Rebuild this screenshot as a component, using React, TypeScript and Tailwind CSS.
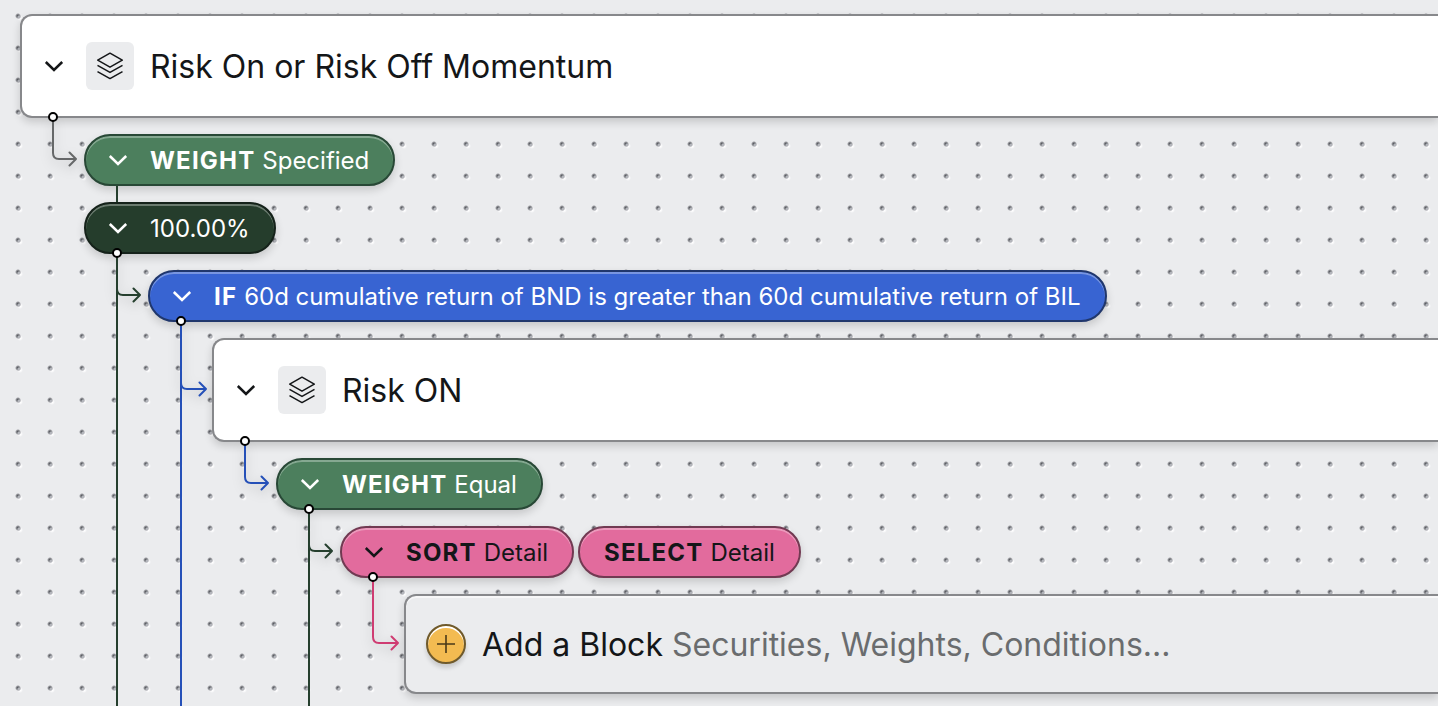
import React from 'react';
import clsx from 'clsx';

type Tone = 'gray' | 'green' | 'blue' | 'pink';

const lineColor: Record<Tone, string> = {
  gray: 'text-[#666869]',
  green: 'text-[#253f2e]',
  blue: 'text-[#2550b8]',
  pink: 'text-[#cf3c72]',
};

const pillColor = {
  green: 'bg-[#4c7f5d] border-[#284836] text-white',
  dark: 'bg-[#253d2c] border-[#15221a] text-white',
  blue: 'bg-[#3864d2] border-[#20376c] text-white',
  pink: 'bg-[#e26b9d] border-[#713a52] text-[#141618]',
};

const Toggle: React.FC = () => (
  <button type="button" aria-label="Collapse" className="flex size-6 shrink-0 items-center justify-center">
    <svg className="h-3 w-5" viewBox="0 0 20 12" fill="none" stroke="currentColor" strokeWidth="2.5">
      <path d="M1.8 2 10 10 18.2 2" />
    </svg>
  </button>
);

const LayersIcon: React.FC = () => (
  <div className="flex size-12 shrink-0 items-center justify-center rounded-md bg-[#ebecee]">
    <svg className="size-7" viewBox="0 0 28 28" fill="none" stroke="currentColor" strokeWidth="1.5" strokeLinejoin="round">
      <path d="M14 1.2 26.3 8.2 14 15.2 1.7 8.2Z" />
      <path d="M1.5 13.4 14 20.4 26.5 13.4" />
      <path d="M1.5 19.6 14 26.6 26.5 19.6" />
    </svg>
  </div>
);

const Pill: React.FC<{ color: keyof typeof pillColor; keyword?: string; text: string; toggle?: boolean }> = ({
  color,
  keyword,
  text,
  toggle = true,
}) => (
  <div
    className={clsx(
      'flex h-13 w-fit items-center gap-5 rounded-full border-2 pr-6 text-2xl whitespace-nowrap',
      'shadow-[inset_0_2px_0_rgba(255,255,255,0.32),0_4px_8px_rgba(0,0,0,0.16)]',
      toggle ? 'pl-5' : 'pl-6',
      pillColor[color],
    )}
  >
    {toggle && <Toggle />}
    <button type="button" className="pt-0.5 leading-7">
      {keyword && <span className="font-bold tracking-wider">{keyword} </span>}
      {text}
    </button>
  </div>
);

const GroupCard: React.FC<{ title: string }> = ({ title }) => (
  <div className="flex items-center rounded-l-xl border-2 border-r-0 border-[#87888b] bg-white py-6.5 pl-5 shadow-[0_4px_8px_rgba(0,0,0,0.16)]">
    <Toggle />
    <div className="ml-5">
      <LayersIcon />
    </div>
    <h2 className="ml-4 pt-0.5 text-[32px] leading-9 whitespace-nowrap">{title}</h2>
  </div>
);

// depth is the distance from the parent's bottom edge down to the arrow, reach is where its tip ends
const Branch: React.FC<{
  tone: Tone;
  depth: number;
  reach?: number;
  continued?: boolean;
  className?: string;
  children: React.ReactNode;
}> = ({ tone, depth, reach = 24, continued, className, children }) => (
  <div className={clsx('relative pt-4 pl-16', className)}>
    <div className={clsx('pointer-events-none absolute inset-y-0 left-8', lineColor[tone])}>
      {continued && <div className="absolute inset-y-0 left-0 w-0.5 bg-current" />}
      <svg
        className="absolute top-0 left-0 drop-shadow-[0_4px_6px_rgba(0,0,0,0.2)]"
        width="28"
        height={depth + 10}
        fill="none"
        stroke="currentColor"
        strokeWidth="2"
        strokeLinecap="round"
        strokeLinejoin="round"
      >
        <path d={`M1 0V${depth - 6}q0 6 6 6H${reach}m-6.5 -6.5 6.5 6.5-6.5 6.5`} />
      </svg>
      <div className="absolute -top-1.5 -left-1 size-2.5 rounded-full border-2 border-black bg-white" />
    </div>
    {children}
  </div>
);

const AddBlock: React.FC = () => (
  <button
    type="button"
    className="flex w-full items-center gap-4 rounded-l-xl border-2 border-r-0 border-[#87888b] bg-[#ebecee] py-7 pl-5 text-left shadow-[inset_0_2px_0_rgba(255,255,255,0.6),0_4px_8px_rgba(0,0,0,0.16)]"
  >
    <span className="flex size-10 shrink-0 items-center justify-center rounded-full border-2 border-[#6f5a2c] bg-[#f3bb51] text-[#4a3a18] shadow-[inset_0_2px_0_#fff,0_4px_4px_rgba(0,0,0,0.14)]">
      <svg className="size-5" viewBox="0 0 20 20" stroke="currentColor" strokeWidth="1.6">
        <path d="M10 1V19M1 10H19" />
      </svg>
    </span>
    <span className="pt-0.5 text-[32px] leading-9 whitespace-nowrap">
      Add a Block <span className="text-[#6a6c6e]">Securities, Weights, Conditions...</span>
    </span>
  </button>
);

const App: React.FC = () => {
  return (
    <main className="min-h-screen overflow-hidden bg-[#ebecee] bg-[radial-gradient(circle_at_19px_17px,#b3b5bb_1px,transparent_2px),radial-gradient(circle_at_18px_16px,#5c5e64_1px,transparent_3px),radial-gradient(circle_at_20px_18px,#ffffff_1px,transparent_3px)] bg-size-[32px_32px] pt-3.5 pl-5 font-['Inter',sans-serif] text-[#141618]">
      <GroupCard title="Risk On or Risk Off Momentum" />
      <Branch tone="gray" depth={41}>
        <Pill color="green" keyword="WEIGHT" text="Specified" />
        <div className="ml-8 h-4 w-0.5 bg-[#253f2e]" />
        <Pill color="dark" text="100.00%" />
        <Branch tone="green" depth={41} continued>
          <Pill color="blue" keyword="IF" text="60d cumulative return of BND is greater than 60d cumulative return of BIL" />
          <Branch tone="blue" depth={67} reach={26} continued>
            <GroupCard title="Risk ON" />
            <Branch tone="blue" depth={41}>
              <Pill color="green" keyword="WEIGHT" text="Equal" />
              <Branch tone="green" depth={41} continued className="pb-3">
                <div className="flex gap-1">
                  <Pill color="pink" keyword="SORT" text="Detail" />
                  <Pill color="pink" keyword="SELECT" text="Detail" toggle={false} />
                </div>
                <Branch tone="pink" depth={65} reach={26}>
                  <AddBlock />
                </Branch>
              </Branch>
            </Branch>
          </Branch>
        </Branch>
      </Branch>
    </main>
  );
};

export default App;
